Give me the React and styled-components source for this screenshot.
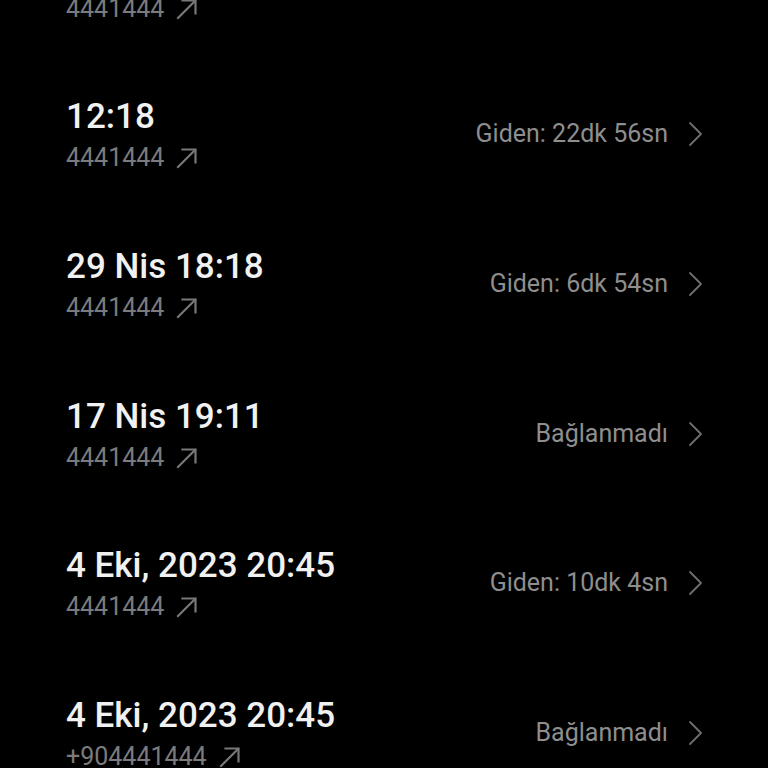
import React from "react";
import styled, { createGlobalStyle } from "styled-components";

const Global = createGlobalStyle`
  html, body { margin: 0; padding: 0; background: #000; height: 100%; overflow: hidden; }
  body { font-family: Roboto, "Noto Sans", Arial, sans-serif; -webkit-font-smoothing: antialiased; }
`;

const Screen = styled.div`
  width: 768px;
  height: 768px;
  background: #000;
  overflow: hidden;
`;

const List = styled.ul`
  list-style: none;
  margin: -90px 0 0;
  padding: 0;
`;

const Row = styled.li`
  height: 149.6px;
  display: flex;
  align-items: center;
  justify-content: space-between;
  padding: 0 64px 0 66px;
  box-sizing: border-box;
`;

const Left = styled.div`
  display: flex;
  flex-direction: column;
  padding-top: 4px;
`;

const Title = styled.div`
  color: #f1f1f1;
  font-size: 35px;
  font-weight: 500;
  line-height: 44px;
  white-space: nowrap;
`;

const Number = styled.div`
  display: flex;
  align-items: center;
  gap: 11px;
  color: #7b7b7b;
  font-size: 25px;
  line-height: 38px;
  white-space: nowrap;
`;

const Right = styled.div`
  display: flex;
  align-items: center;
  gap: 20px;
  color: #8e8e8e;
  font-size: 25px;
  line-height: 30px;
  white-space: nowrap;
`;

const Arrow = () => (
  <svg width="24" height="24" viewBox="0 0 24 24" fill="none" stroke="#787878" strokeWidth="2.2" strokeLinecap="square">
    <line x1="3" y1="21" x2="20" y2="4" />
    <polyline points="7.5,3.5 20.5,3.5 20.5,16.5" />
  </svg>
);

const Chevron = () => (
  <svg width="16" height="26" viewBox="0 0 16 26" fill="none" stroke="#6e6e6e" strokeWidth="1.8" strokeLinecap="round" strokeLinejoin="round">
    <polyline points="2,2 13,13 2,24" />
  </svg>
);

const calls = [
  { title: "", number: "4441444", status: "" },
  { title: "12:18", number: "4441444", status: "Giden: 22dk 56sn" },
  { title: "29 Nis 18:18", number: "4441444", status: "Giden: 6dk 54sn" },
  { title: "17 Nis 19:11", number: "4441444", status: "Bağlanmadı" },
  { title: "4 Eki, 2023 20:45", number: "4441444", status: "Giden: 10dk 4sn" },
  { title: "4 Eki, 2023 20:45", number: "+904441444", status: "Bağlanmadı" },
];

export default function App() {
  return (
    <Screen>
      <Global />
      <List>
        {calls.map((c, i) => (
          <Row key={i}>
            <Left>
              <Title>{c.title || "\u00a0"}</Title>
              <Number>
                {c.number}
                <Arrow />
              </Number>
            </Left>
            <Right>
              {c.status}
              {c.status && <Chevron />}
            </Right>
          </Row>
        ))}
      </List>
    </Screen>
  );
}
